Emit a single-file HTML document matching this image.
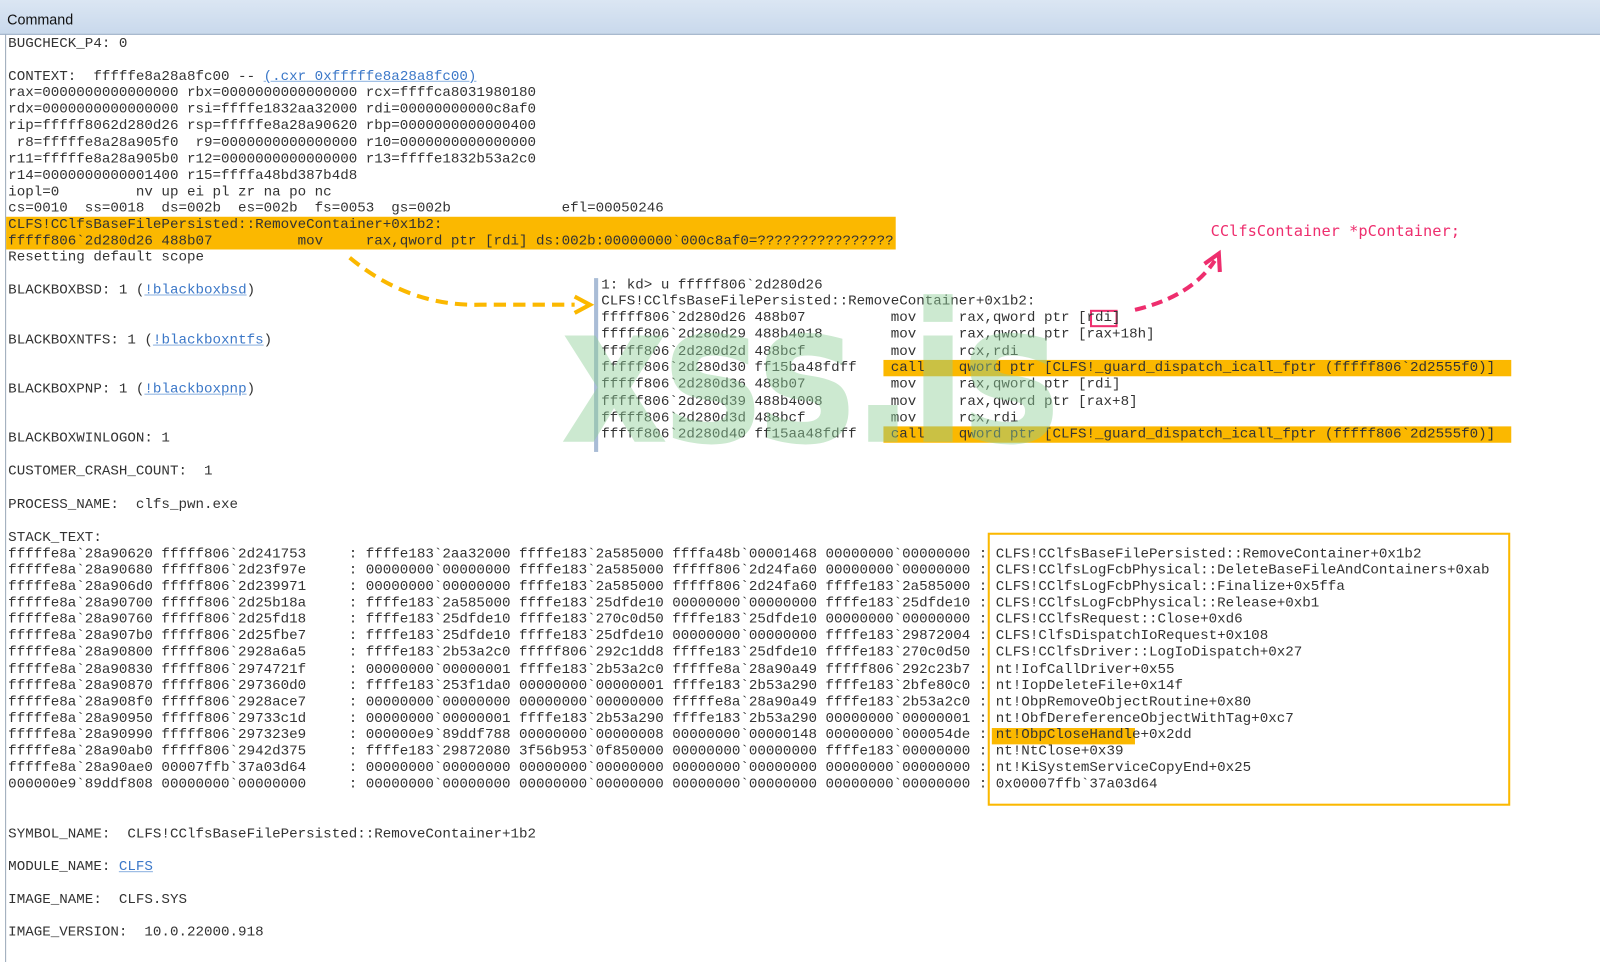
<!DOCTYPE html>
<html><head><meta charset="utf-8"><style>
*{margin:0;padding:0;box-sizing:border-box}
body{width:1600px;height:941px;overflow:hidden;background:#fff;position:relative;font-family:"Liberation Mono",monospace;}
#wrap{position:absolute;left:0;top:0;width:1600px;height:941px;transform:scale(1.0225);transform-origin:0 0}
.title{position:absolute;left:0;top:0;width:1600px;height:34px;background:linear-gradient(#dbe6f3,#c9d9ec);border-bottom:1px solid #8ea4c0;}
.title span{position:absolute;left:7px;top:11px;font:14px "Liberation Sans",sans-serif;color:#111}
.content{position:absolute;left:5px;top:34px;width:1595px;height:907px;border-left:1px solid #9aa8b8;}
pre{font-family:"Liberation Mono",monospace;font-size:13.88px;line-height:16.1px;color:#333;white-space:pre;}
#main{position:absolute;left:8px;top:35px;}
.lnk{color:#3c78c8;text-decoration:underline;text-decoration-color:#8ab0e0}
.hl{position:absolute;background:#fbb800}
#dis{position:absolute;left:588px;top:270.5px;line-height:16.3px}
.pink{position:absolute;left:1184px;top:217px;font:15px "DejaVu Sans Mono",monospace;color:#ee2e6e}
.wm{position:absolute;left:548px;top:272px;font:bold 190px "DejaVu Sans","Liberation Sans",sans-serif;color:#8fce98;opacity:0.45;letter-spacing:-6px;line-height:1;transform:scaleX(0.86);transform-origin:0 0}
</style></head><body><div id="wrap">
<div class="title"><span>Command</span></div>
<div class="content"></div>
<div class="hl" style="left:6px;top:212px;width:870px;height:32px"></div>
<div class="hl" style="left:864px;top:352px;width:614px;height:16px"></div>
<div class="hl" style="left:864px;top:417px;width:614px;height:16px"></div>
<div class="hl" style="left:970px;top:712px;width:140px;height:16px"></div>
<div style="position:absolute;left:966px;top:521px;width:511px;height:267px;border:2px solid #fbb800"></div>
<div style="position:absolute;left:581px;top:272px;width:4px;height:170px;background:#a9bcd6"></div>
<div style="position:absolute;left:1066px;top:303px;width:27px;height:17px;border:2px solid #ee2e6e"></div>
<pre id="main">BUGCHECK_P4: 0

CONTEXT:  fffffe8a28a8fc00 -- <span class="lnk">(.cxr 0xfffffe8a28a8fc00)</span>
rax=0000000000000000 rbx=0000000000000000 rcx=ffffca8031980180
rdx=0000000000000000 rsi=ffffe1832aa32000 rdi=00000000000c8af0
rip=fffff8062d280d26 rsp=fffffe8a28a90620 rbp=0000000000000400
 r8=fffffe8a28a905f0  r9=0000000000000000 r10=0000000000000000
r11=fffffe8a28a905b0 r12=0000000000000000 r13=ffffe1832b53a2c0
r14=0000000000001400 r15=ffffa48bd387b4d8
iopl=0         nv up ei pl zr na po nc
cs=0010  ss=0018  ds=002b  es=002b  fs=0053  gs=002b             efl=00050246
CLFS!CClfsBaseFilePersisted::RemoveContainer+0x1b2:
fffff806`2d280d26 488b07          mov     rax,qword ptr [rdi] ds:002b:00000000`000c8af0=????????????????
Resetting default scope

BLACKBOXBSD: 1 (<span class="lnk">!blackboxbsd</span>)


BLACKBOXNTFS: 1 (<span class="lnk">!blackboxntfs</span>)


BLACKBOXPNP: 1 (<span class="lnk">!blackboxpnp</span>)


BLACKBOXWINLOGON: 1

CUSTOMER_CRASH_COUNT:  1

PROCESS_NAME:  clfs_pwn.exe

STACK_TEXT:  
fffffe8a`28a90620 fffff806`2d241753     : ffffe183`2aa32000 ffffe183`2a585000 ffffa48b`00001468 00000000`00000000 : CLFS!CClfsBaseFilePersisted::RemoveContainer+0x1b2
fffffe8a`28a90680 fffff806`2d23f97e     : 00000000`00000000 ffffe183`2a585000 fffff806`2d24fa60 00000000`00000000 : CLFS!CClfsLogFcbPhysical::DeleteBaseFileAndContainers+0xab
fffffe8a`28a906d0 fffff806`2d239971     : 00000000`00000000 ffffe183`2a585000 fffff806`2d24fa60 ffffe183`2a585000 : CLFS!CClfsLogFcbPhysical::Finalize+0x5ffa
fffffe8a`28a90700 fffff806`2d25b18a     : ffffe183`2a585000 ffffe183`25dfde10 00000000`00000000 ffffe183`25dfde10 : CLFS!CClfsLogFcbPhysical::Release+0xb1
fffffe8a`28a90760 fffff806`2d25fd18     : ffffe183`25dfde10 ffffe183`270c0d50 ffffe183`25dfde10 00000000`00000000 : CLFS!CClfsRequest::Close+0xd6
fffffe8a`28a907b0 fffff806`2d25fbe7     : ffffe183`25dfde10 ffffe183`25dfde10 00000000`00000000 ffffe183`29872004 : CLFS!ClfsDispatchIoRequest+0x108
fffffe8a`28a90800 fffff806`2928a6a5     : ffffe183`2b53a2c0 fffff806`292c1dd8 ffffe183`25dfde10 ffffe183`270c0d50 : CLFS!CClfsDriver::LogIoDispatch+0x27
fffffe8a`28a90830 fffff806`2974721f     : 00000000`00000001 ffffe183`2b53a2c0 fffffe8a`28a90a49 fffff806`292c23b7 : nt!IofCallDriver+0x55
fffffe8a`28a90870 fffff806`297360d0     : ffffe183`253f1da0 00000000`00000001 ffffe183`2b53a290 ffffe183`2bfe80c0 : nt!IopDeleteFile+0x14f
fffffe8a`28a908f0 fffff806`2928ace7     : 00000000`00000000 00000000`00000000 fffffe8a`28a90a49 ffffe183`2b53a2c0 : nt!ObpRemoveObjectRoutine+0x80
fffffe8a`28a90950 fffff806`29733c1d     : 00000000`00000001 ffffe183`2b53a290 ffffe183`2b53a290 00000000`00000001 : nt!ObfDereferenceObjectWithTag+0xc7
fffffe8a`28a90990 fffff806`297323e9     : 000000e9`89ddf788 00000000`00000008 00000000`00000148 00000000`000054de : nt!ObpCloseHandle+0x2dd
fffffe8a`28a90ab0 fffff806`2942d375     : ffffe183`29872080 3f56b953`0f850000 00000000`00000000 ffffe183`00000000 : nt!NtClose+0x39
fffffe8a`28a90ae0 00007ffb`37a03d64     : 00000000`00000000 00000000`00000000 00000000`00000000 00000000`00000000 : nt!KiSystemServiceCopyEnd+0x25
000000e9`89ddf808 00000000`00000000     : 00000000`00000000 00000000`00000000 00000000`00000000 00000000`00000000 : 0x00007ffb`37a03d64


SYMBOL_NAME:  CLFS!CClfsBaseFilePersisted::RemoveContainer+1b2

MODULE_NAME: <span class="lnk">CLFS</span>

IMAGE_NAME:  CLFS.SYS

IMAGE_VERSION:  10.0.22000.918</pre>
<pre id="dis">1: kd&gt; u fffff806`2d280d26
CLFS!CClfsBaseFilePersisted::RemoveContainer+0x1b2:
fffff806`2d280d26 488b07          mov     rax,qword ptr [rdi]
fffff806`2d280d29 488b4018        mov     rax,qword ptr [rax+18h]
fffff806`2d280d2d 488bcf          mov     rcx,rdi
fffff806`2d280d30 ff15ba48fdff    call    qword ptr [CLFS!_guard_dispatch_icall_fptr (fffff806`2d2555f0)]
fffff806`2d280d36 488b07          mov     rax,qword ptr [rdi]
fffff806`2d280d39 488b4008        mov     rax,qword ptr [rax+8]
fffff806`2d280d3d 488bcf          mov     rcx,rdi
fffff806`2d280d40 ff15aa48fdff    call    qword ptr [CLFS!_guard_dispatch_icall_fptr (fffff806`2d2555f0)]</pre>
<div class="wm">xss.is</div>
<div class="pink">CClfsContainer *pContainer;</div>
<svg style="position:absolute;left:0;top:0" width="1600" height="941">
<path d="M342 252 Q400 300 470 298 L562 298" fill="none" stroke="#fbb800" stroke-width="4" stroke-dasharray="12 7"/>
<path d="M562 290 L577 298 L562 306" fill="none" stroke="#fbb800" stroke-width="4"/>
<path d="M1110 303 Q1165 290 1188 255" fill="none" stroke="#ee2e6e" stroke-width="4" stroke-dasharray="11 6"/>
<path d="M1178 258 L1192 248 L1193 266" fill="none" stroke="#ee2e6e" stroke-width="4"/>
</svg>
</div></body></html>
